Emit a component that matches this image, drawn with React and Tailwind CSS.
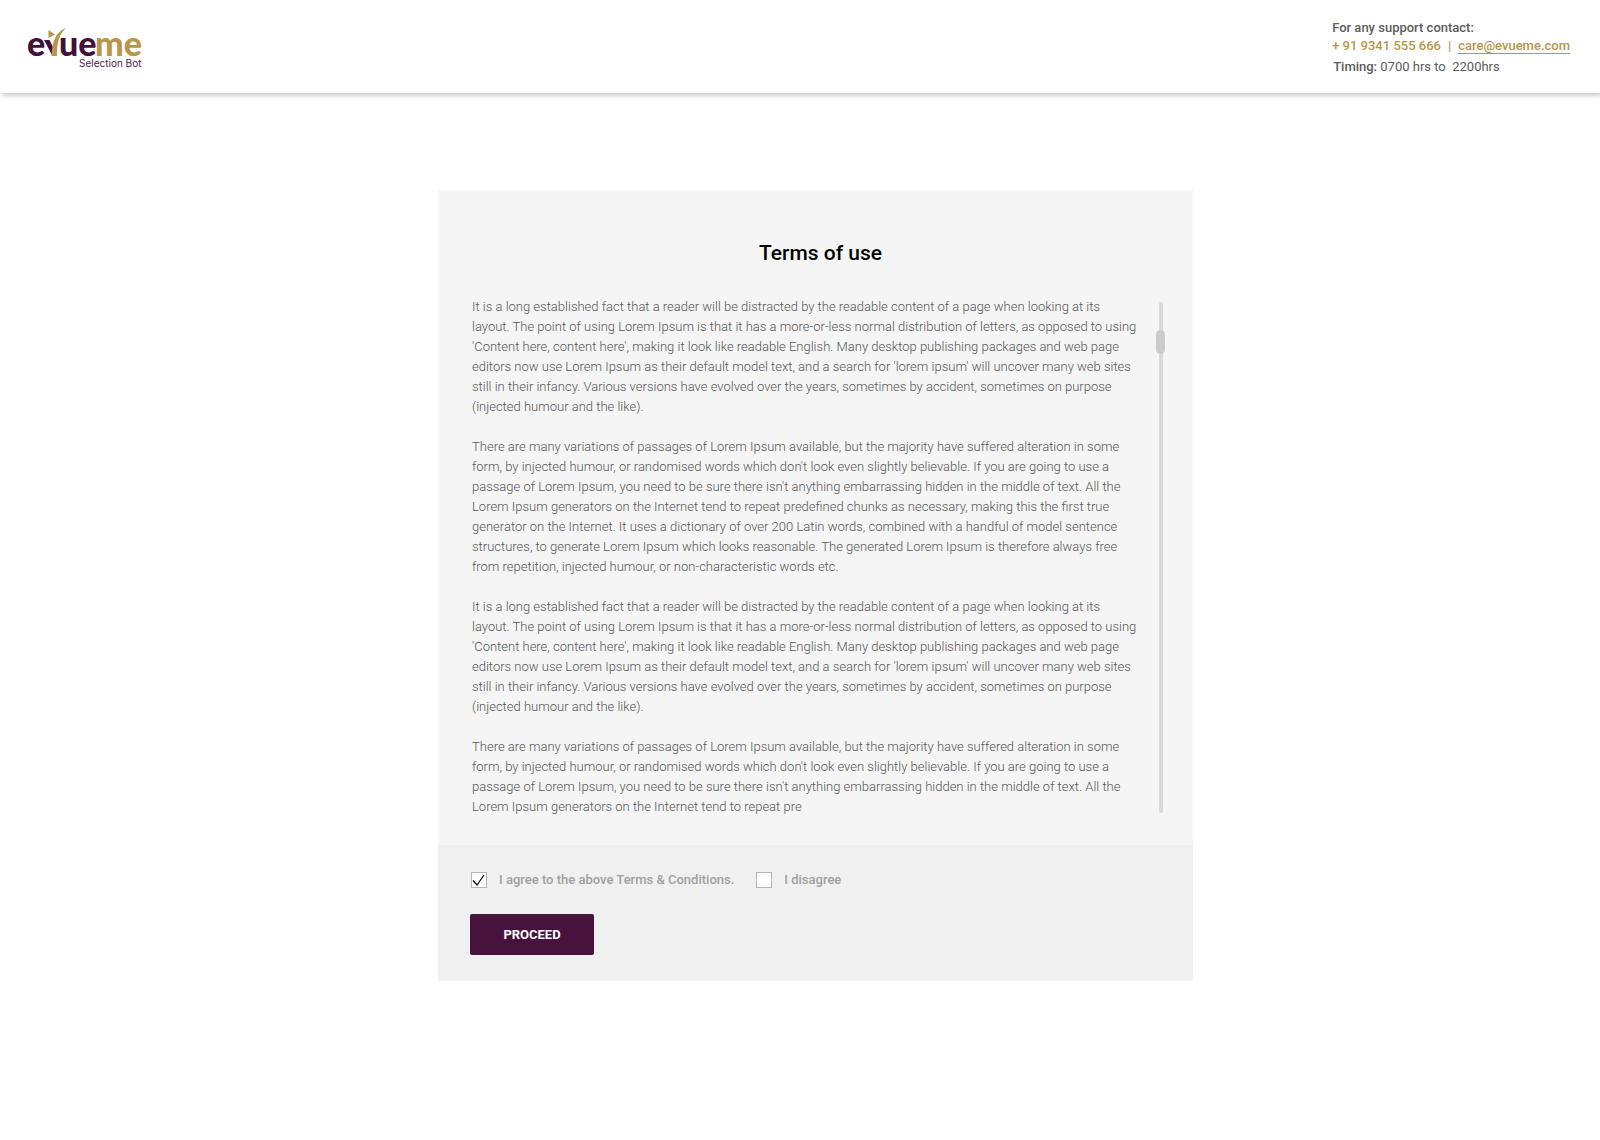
import { useState } from "react";

const ESTABLISHED = [
  "It is a long established fact that a reader will be distracted by the readable content of a page when looking at its",
  "layout. The point of using Lorem Ipsum is that it has a more-or-less normal distribution of letters, as opposed to using",
  "'Content here, content here', making it look like readable English. Many desktop publishing packages and web page",
  "editors now use Lorem Ipsum as their default model text, and a search for 'lorem ipsum' will uncover many web sites",
  "still in their infancy. Various versions have evolved over the years, sometimes by accident, sometimes on purpose",
  "(injected humour and the like).",
];

const VARIATIONS = [
  "There are many variations of passages of Lorem Ipsum available, but the majority have suffered alteration in some",
  "form, by injected humour, or randomised words which don't look even slightly believable. If you are going to use a",
  "passage of Lorem Ipsum, you need to be sure there isn't anything embarrassing hidden in the middle of text. All the",
];

const TERMS = [
  ESTABLISHED,
  [
    ...VARIATIONS,
    "Lorem Ipsum generators on the Internet tend to repeat predefined chunks as necessary, making this the first true",
    "generator on the Internet. It uses a dictionary of over 200 Latin words, combined with a handful of model sentence",
    "structures, to generate Lorem Ipsum which looks reasonable. The generated Lorem Ipsum is therefore always free",
    "from repetition, injected humour, or non-characteristic words etc.",
  ],
  ESTABLISHED,
  [...VARIATIONS, "Lorem Ipsum generators on the Internet tend to repeat pre"],
];

function Logo() {
  return (
    <svg width="124" height="52" viewBox="-4 -4 124 52" role="img" aria-label="evueme Selection Bot">
      <g fontFamily="Lato, sans-serif" fontWeight="900" fontSize="34">
        <text x="-1" y="32" fill="#430f3d">e</text>
        <text x="31" y="32" fill="#430f3d">ue</text>
        <text x="67" y="32" fill="#b8964a">me</text>
      </g>
      <path d="M16 16H21.500L26 25L24.500 32Z" fill="#430f3d" />
      <path d="M20.500 6L27 10.500L20.500 14Z" fill="#b8964a" />
      <path d="M38 4C29 7 24 16 23.500 32H29C28.500 20 31 10 38 4Z" fill="#b8964a" />
      <text x="51" y="43" fontFamily="Inter, sans-serif" fontSize="10" fill="#54204f">
        Selection Bot
      </text>
    </svg>
  );
}

function Choice({ label, checked, onChange }) {
  return (
    <label className="flex items-center gap-3">
      <span className="relative block size-4">
        <input
          type="checkbox"
          checked={checked}
          onChange={onChange}
          className="peer block size-4 appearance-none border border-[#b4b4b4] bg-white"
        />
        <svg viewBox="0 0 16 16" className="pointer-events-none absolute inset-0 hidden size-4 peer-checked:block">
          <path d="M2 8.500L6 13L13 3" fill="none" stroke="#000" strokeWidth="1.200" />
        </svg>
      </span>
      {label}
    </label>
  );
}

export default function App() {
  const [agreed, setAgreed] = useState(true);

  return (
    <div className="min-h-screen bg-white font-['Roboto',sans-serif]">
      <header className="flex h-[93px] justify-between bg-white pr-[30px] pl-6 shadow-[2px_2px_5px_rgba(0,0,0,0.25)]">
        <div className="pt-5">
          <Logo />
        </div>
        <address className="pt-[18px] text-[13px] leading-5 text-[#5c5c5c] not-italic">
          <p className="font-medium">For any support contact:</p>
          <p className="flex items-center gap-[7px] leading-4 font-medium text-[#b8964a]">
            <span>+ 91 9341 555 666</span>
            <span>|</span>
            <a href="mailto:care@evueme.com" className="border-b border-[#b8964a] leading-[14px]">
              care@evueme.com
            </a>
          </p>
          <p className="mt-[3px] pl-px">
            <span className="font-medium">Timing:</span> 0700 hrs to&nbsp; 2200hrs
          </p>
        </address>
      </header>

      <div className="pt-[97px] pb-10 pl-[31px]">
        <main className="mx-auto w-full max-w-[755px]">
          <section className="bg-[#f5f5f5] pt-[47px] pr-7 pb-7 pl-[34px]">
            <h1 className="pl-1 text-center text-[21px] leading-8 font-medium text-black">Terms of use</h1>
            <div className="mt-7 flex justify-between">
              <div className="space-y-5 text-[13px] leading-5 font-light text-[#555]">
                {TERMS.map((lines, i) => (
                  <p key={i} className="whitespace-nowrap">
                    {lines.map((line) => (
                      <span key={line} className="block">{line}</span>
                    ))}
                  </p>
                ))}
              </div>
              <div className="relative mt-[5px] mr-0.5 mb-1 w-1 rounded-sm bg-[#d9d9d9]">
                <div className="absolute top-7 -left-[3px] h-6 w-[9px] rounded-full bg-[#cbcbcb]" />
              </div>
            </div>
          </section>

          <section className="bg-[#f0f0f0] px-8 pt-[25px] pb-[26px]">
            <div className="flex gap-[22px] pl-px text-[13px] leading-5 font-medium text-[#a0a0a0]">
              <Choice
                label="I agree to the above Terms & Conditions."
                checked={agreed}
                onChange={() => setAgreed(true)}
              />
              <Choice label="I disagree" checked={!agreed} onChange={() => setAgreed(false)} />
            </div>
            <button
              type="button"
              className="mt-6 block h-[41px] w-[124px] rounded-xs bg-[#47123c] text-[13px] font-bold text-white"
            >
              PROCEED
            </button>
          </section>
        </main>
      </div>
    </div>
  );
}
